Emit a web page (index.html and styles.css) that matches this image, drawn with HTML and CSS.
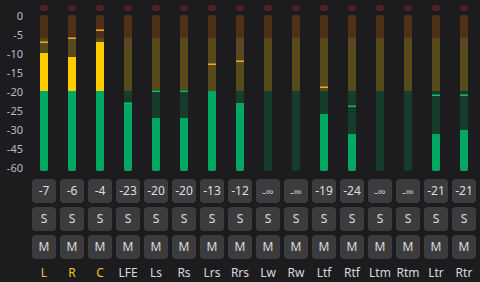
FILE: index.html
```html
<!DOCTYPE html>
<html lang="en">
<head>
  <meta charset="UTF-8">
  <title>Channel Meters</title>
  <link rel="stylesheet" href="styles.css">
</head>
<body>
  <div class="mixer">
    <!-- dB scale -->
    <div class="scale">
      <span>0</span>
      <span>-5</span>
      <span>-10</span>
      <span>-15</span>
      <span>-20</span>
      <span>-25</span>
      <span>-30</span>
      <span>-45</span>
      <span>-60</span>
    </div>

    <div class="strip">
      <div class="clip"></div>
      <div class="meter">
        <div class="fill" style="height:118px"></div>
        <div class="peak warn" style="top:26px"></div>
      </div>
      <div class="btn value">-7</div>
      <div class="btn">S</div>
      <div class="btn">M</div>
      <div class="name front">L</div>
    </div>

    <div class="strip">
      <div class="clip"></div>
      <div class="meter">
        <div class="fill" style="height:114px"></div>
        <div class="peak warn" style="top:22px"></div>
      </div>
      <div class="btn value">-6</div>
      <div class="btn">S</div>
      <div class="btn">M</div>
      <div class="name front">R</div>
    </div>

    <div class="strip">
      <div class="clip"></div>
      <div class="meter">
        <div class="fill" style="height:129px"></div>
        <div class="peak warn" style="top:14px"></div>
      </div>
      <div class="btn value">-4</div>
      <div class="btn">S</div>
      <div class="btn">M</div>
      <div class="name front">C</div>
    </div>

    <div class="strip">
      <div class="clip"></div>
      <div class="meter">
        <div class="fill" style="height:68px"></div>
        <div class="peak ok" style="top:87px"></div>
      </div>
      <div class="btn value">-23</div>
      <div class="btn">S</div>
      <div class="btn">M</div>
      <div class="name">LFE</div>
    </div>

    <div class="strip">
      <div class="clip"></div>
      <div class="meter">
        <div class="fill" style="height:53px"></div>
        <div class="peak ok" style="top:75px"></div>
      </div>
      <div class="btn value">-20</div>
      <div class="btn">S</div>
      <div class="btn">M</div>
      <div class="name">Ls</div>
    </div>

    <div class="strip">
      <div class="clip"></div>
      <div class="meter">
        <div class="fill" style="height:53px"></div>
        <div class="peak ok" style="top:75px"></div>
      </div>
      <div class="btn value">-20</div>
      <div class="btn">S</div>
      <div class="btn">M</div>
      <div class="name">Rs</div>
    </div>

    <div class="strip">
      <div class="clip"></div>
      <div class="meter">
        <div class="fill" style="height:80px"></div>
        <div class="peak warn" style="top:48px"></div>
      </div>
      <div class="btn value">-13</div>
      <div class="btn">S</div>
      <div class="btn">M</div>
      <div class="name">Lrs</div>
    </div>

    <div class="strip">
      <div class="clip"></div>
      <div class="meter">
        <div class="fill" style="height:68px"></div>
        <div class="peak warn" style="top:45px"></div>
      </div>
      <div class="btn value">-12</div>
      <div class="btn">S</div>
      <div class="btn">M</div>
      <div class="name">Rrs</div>
    </div>

    <div class="strip">
      <div class="clip"></div>
      <div class="meter"></div>
      <div class="btn value inf">-∞</div>
      <div class="btn">S</div>
      <div class="btn">M</div>
      <div class="name">Lw</div>
    </div>

    <div class="strip">
      <div class="clip"></div>
      <div class="meter"></div>
      <div class="btn value inf">-∞</div>
      <div class="btn">S</div>
      <div class="btn">M</div>
      <div class="name">Rw</div>
    </div>

    <div class="strip">
      <div class="clip"></div>
      <div class="meter">
        <div class="fill" style="height:57px"></div>
        <div class="peak warn" style="top:71px"></div>
      </div>
      <div class="btn value">-19</div>
      <div class="btn">S</div>
      <div class="btn">M</div>
      <div class="name">Ltf</div>
    </div>

    <div class="strip">
      <div class="clip"></div>
      <div class="meter">
        <div class="fill" style="height:37px"></div>
        <div class="peak ok" style="top:90px"></div>
      </div>
      <div class="btn value">-24</div>
      <div class="btn">S</div>
      <div class="btn">M</div>
      <div class="name">Rtf</div>
    </div>

    <div class="strip">
      <div class="clip"></div>
      <div class="meter"></div>
      <div class="btn value inf">-∞</div>
      <div class="btn">S</div>
      <div class="btn">M</div>
      <div class="name">Ltm</div>
    </div>

    <div class="strip">
      <div class="clip"></div>
      <div class="meter"></div>
      <div class="btn value inf">-∞</div>
      <div class="btn">S</div>
      <div class="btn">M</div>
      <div class="name">Rtm</div>
    </div>

    <div class="strip">
      <div class="clip"></div>
      <div class="meter">
        <div class="fill" style="height:37px"></div>
        <div class="peak ok" style="top:79px"></div>
      </div>
      <div class="btn value">-21</div>
      <div class="btn">S</div>
      <div class="btn">M</div>
      <div class="name">Ltr</div>
    </div>

    <div class="strip">
      <div class="clip"></div>
      <div class="meter">
        <div class="fill" style="height:41px"></div>
        <div class="peak ok" style="top:79px"></div>
      </div>
      <div class="btn value">-21</div>
      <div class="btn">S</div>
      <div class="btn">M</div>
      <div class="name">Rtr</div>
    </div>
  </div>
</body>
</html>
```

FILE: styles.css
```css
html, body {
  margin: 0;
  padding: 0;
  background: #1c1c1e;
  color: #dcdcdc;
  font-family: 'Noto Sans', 'Open Sans', Arial, sans-serif;
  overflow: hidden;
}
.mixer {
  display: flex;
  flex-direction: row;
  gap: 4px;
  width: 480px;
  height: 282px;
}
.scale {
  width: 28px;
  box-sizing: border-box;
  padding-top: 6px;
  padding-right: 5px;
  display: flex;
  flex-direction: column;
  align-items: flex-end;
  color: #b6bdc8;
  font-size: 11px;
}
.scale span {
  height: 19px;
  line-height: 19px;
}
.strip {
  width: 24px;
  display: flex;
  flex-direction: column;
  align-items: center;
  padding-top: 5px;
}
.clip {
  width: 8px;
  height: 6px;
  border-radius: 2px;
  background: #4b2225;
  margin-bottom: 4px;
}
.meter {
  position: relative;
  width: 8px;
  height: 156px;
  border-radius: 2px;
  overflow: hidden;
  background: linear-gradient(to bottom, #4f3118 0 23px, #564a1b 23px 76px, #163d2c 76px);
  margin-bottom: 8px;
}
.fill {
  position: absolute;
  left: 0;
  right: 0;
  bottom: 0;
  background: linear-gradient(to top, #00a862 0 80px, #ffcc00 80px);
}
.peak {
  position: absolute;
  left: 0;
  right: 0;
  height: 2px;
}
.peak.warn {
  background: linear-gradient(to bottom, #a0723a 50%, #f2a628 50%);
}
.peak.ok {
  background: linear-gradient(to bottom, #0e7a4c 50%, #10c070 50%);
}
.btn {
  width: 24px;
  height: 24px;
  border-radius: 4px;
  background: #3c3c3f;
  display: flex;
  align-items: center;
  justify-content: center;
  font-size: 12px;
  line-height: 1;
  margin-bottom: 4px;
}
.btn.inf {
  font-size: 11px;
}
.name {
  margin-top: 2px;
  font-size: 12px;
  line-height: 16px;
  color: #d6dadf;
}
.name.front {
  color: #f0c428;
}
```
